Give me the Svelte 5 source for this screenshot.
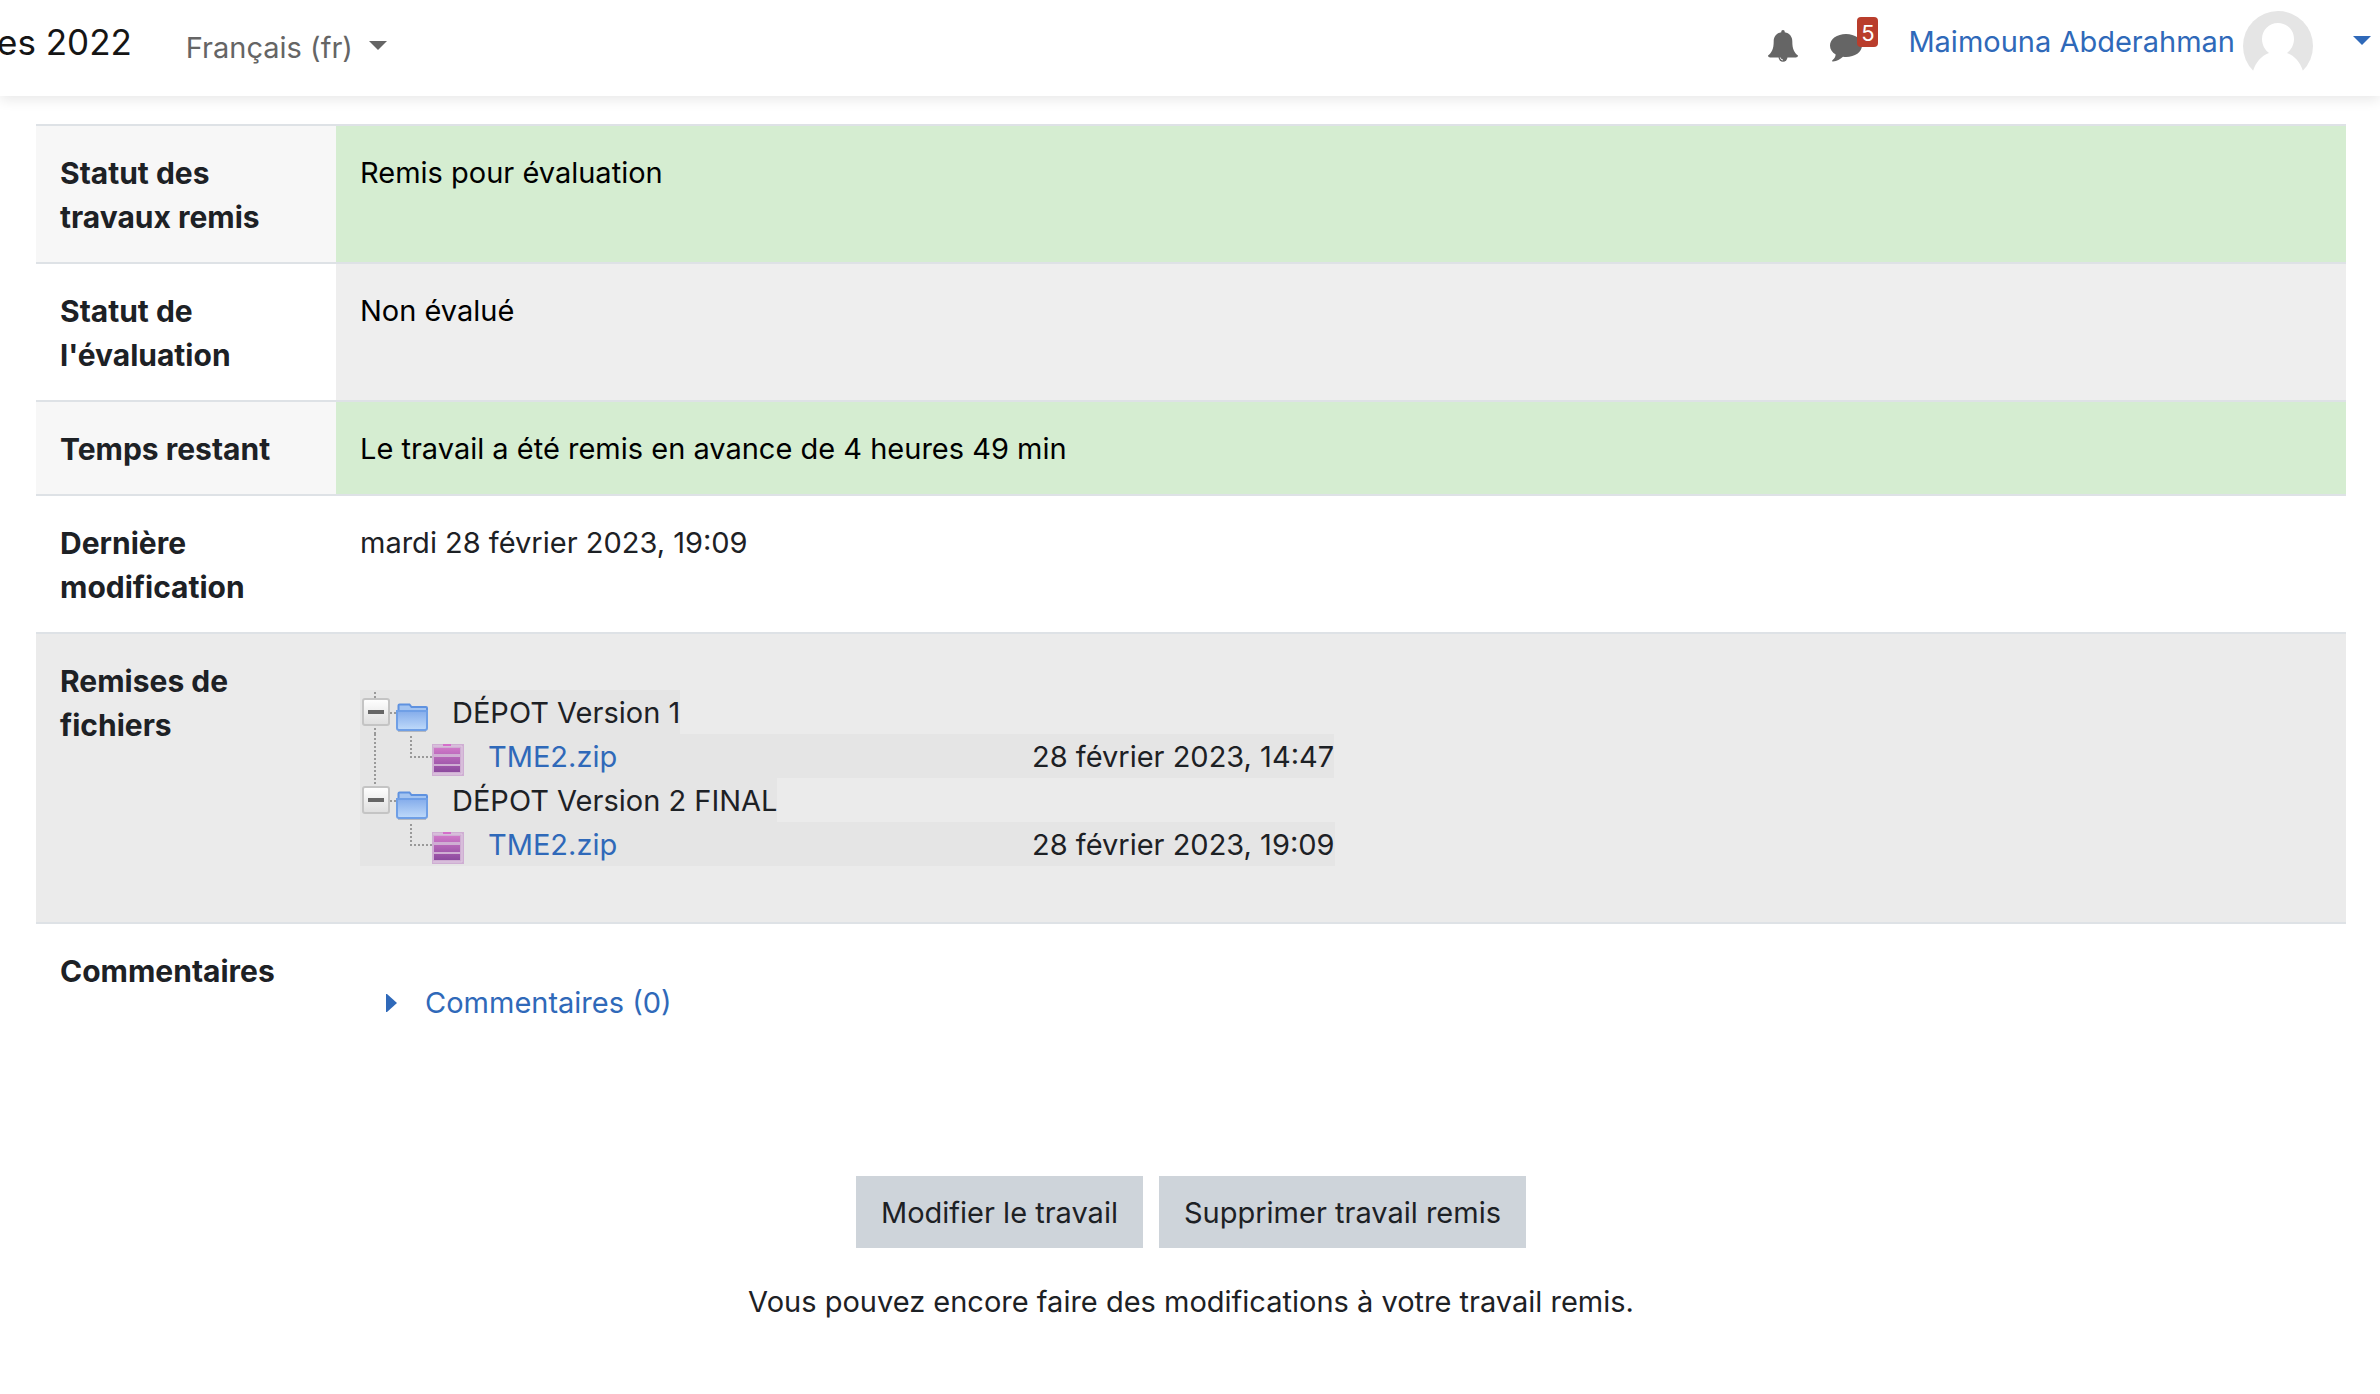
<script>
  const files = [
    { folder: 'DÉPOT Version 1', name: 'TME2.zip', date: '28 février 2023, 14:47' },
    { folder: 'DÉPOT Version 2 FINAL', name: 'TME2.zip', date: '28 février 2023, 19:09' }
  ];
</script>

<header>
  <span class="course">es 2022</span>
  <button class="lang">Français (fr)
    <svg width="18" height="9" viewBox="0 0 18 9"><path d="M0 0h18L9 9z" fill="currentColor" /></svg>
  </button>
  <div class="tools">
    <button class="icon" aria-label="Notifications">
      <svg width="30" height="32" viewBox="0 0 30 32">
        <path d="M15 0c1.200 0 1.800.8 1.700 2.200 4.800.8 7.600 4.500 7.600 9 0 8 2 11.300 5.700 14.300 0 1.200-1 2-2.200 2H2.200C1 27.500 0 26.700 0 25.500c3.700-3 5.700-6.300 5.700-14.300 0-4.500 2.800-8.200 7.600-9C13.200.8 13.800 0 15 0z" fill="#656565" />
        <path d="M10.500 27h9a4.500 4.800 0 0 1-9 0z" fill="#656565" />
        <path d="M12.300 27.500a2.700 2.700 0 0 0 2.700 2.500" fill="none" stroke="#fff" stroke-width=".9" />
      </svg>
    </button>
    <button class="icon chat" aria-label="Messages">
      <svg width="32" height="32" viewBox="0 -4 32 32">
        <path d="M16 0c9 0 16 5 16 11.500S25 23 16 23c-1 0-2 0-3-.2C10 25.500 7 27 3 27.500c-.9.100-1.200-.8-.6-1.300 2-1.700 3-3.200 3.300-5.700C2 18.400 0 15.200 0 11.500 0 5 7 0 16 0z" fill="#656565" />
      </svg>
      <span class="badge">5</span>
    </button>
    <a class="user" href="#user"><span>Maimouna Abderahman</span>
      <svg width="70" height="70" viewBox="0 0 70 70">
        <circle cx="35" cy="35" r="35" fill="#e5e5e5" />
        <path d="M35 12c9 0 16 7 16 16 0 6-3 11-7 14 8 3 13 9 16 18v10H10V60c3-9 8-15 16-18-4-3-7-8-7-14 0-9 7-16 16-16z" fill="#fff" />
        <path d="M0 60h70v10H0z" fill="#fff" />
      </svg>
    </a>
    <button class="caret" aria-label="Menu utilisateur">
      <svg width="18" height="9" viewBox="0 0 18 9"><path d="M0 0h18L9 9z" fill="currentColor" /></svg>
    </button>
  </div>
</header>

<main>
  <table>
    <tbody>
      <tr class="odd"><th scope="row">Statut des travaux remis</th><td class="ok">Remis pour évaluation</td></tr>
      <tr><th scope="row">Statut de l'évaluation</th><td class="neutral">Non évalué</td></tr>
      <tr class="odd"><th scope="row">Temps restant</th><td class="ok">Le travail a été remis en avance de 4 heures 49 min</td></tr>
      <tr><th scope="row">Dernière modification</th><td>mardi 28 février 2023, 19:09</td></tr>
      <tr class="active">
        <th scope="row">Remises de fichiers</th>
        <td>
          <div class="tree">
            {#each files as file, i}
              <div class="folder">
                <svg width="72" height="44" viewBox="0 0 72 44">
                  <defs>
                    <linearGradient id="blue{i}" x1="0" y1="0" x2="0" y2="1"><stop offset="0" stop-color="#84aceb" /><stop offset="1" stop-color="#bfdafa" /></linearGradient>
                    <linearGradient id="box{i}" x1="0" y1="0" x2="0" y2="1"><stop offset="0" stop-color="#fff" /><stop offset="1" stop-color="#dedede" /></linearGradient>
                  </defs>
                  <path d={i === 0 ? 'M15 2v6M15 38v6' : 'M15 0v8'} class="dots" />
                  <path d="M30 23h6" class="dots" />
                  <rect x="3" y="9" width="26" height="26" rx="2" fill="url(#box{i})" stroke="#c4c4c4" stroke-width="2" />
                  <path d="M8 22h16" stroke="#666" stroke-width="4" />
                  <path d="M38 41h28" stroke="#b4b8c0" stroke-width="2" />
                  <path d="M38.500 22v-6.500q0-1 1-1h10l2 2.500h14.500q1 0 1 1V22z" fill="#a3c4f1" stroke="#5f92e0" stroke-width="2" />
                  <path d="M37 21h30v17q0 2-2 2H39q-2 0-2-2z" fill="url(#blue{i})" stroke="#6f9fe6" stroke-width="2" />
                </svg>
                <span>{file.folder}</span>
              </div>
              <div class="file">
                <svg width="108" height="44" viewBox="0 0 108 44">
                  <defs><linearGradient id="violet{i}" x1="0" y1="0" x2="0" y2="1"><stop offset="0" stop-color="#cf78c8" /><stop offset="1" stop-color="#8c4a9e" /></linearGradient></defs>
                  {#if i === 0}<path d="M15 0v44" class="dots" />{/if}
                  <path d="M51 2v21h21" class="dots" />
                  <rect x="72" y="10" width="32" height="32" fill="#cfaed3" />
                  <path d="M74 14h26v6H74zM74 23h26v7H74zM74 32h26v6H74z" fill="url(#violet{i})" />
                  <path d="M73 12h29v28H73" fill="none" stroke="#e0cce2" stroke-width="1" />
                  <path d="M83 10h8v2h-8z" fill="#d56fcb" />
                </svg>
                <a href="#file">{file.name}</a>
                <time>{file.date}</time>
              </div>
            {/each}
          </div>
        </td>
      </tr>
      <tr>
        <th scope="row">Commentaires</th>
        <td>
          <a class="comments" href="#comments">
            <svg width="11" height="18" viewBox="0 0 11 18"><path d="M0 0h1l10 9-10 9H0z" fill="currentColor" /></svg>
            Commentaires (0)
          </a>
        </td>
      </tr>
    </tbody>
  </table>
  <div class="actions">
    <button>Modifier le travail</button>
    <button>Supprimer travail remis</button>
  </div>
  <p>Vous pouvez encore faire des modifications à votre travail remis.</p>
</main>

<style>
  :global(body) {
    background: #fff;
    color: #1d2125;
    font: 29px/44px Inter, "Liberation Sans", sans-serif;
  }
  button { font: inherit; color: inherit; border: 0; background: none; padding: 0; }
  a { color: #2f69b9; text-decoration: none; }
  svg { display: block; flex: none; }
  header {
    display: flex;
    height: 96px;
    overflow-x: clip;
    box-shadow: 0 4px 12px rgba(0, 0, 0, .09);
  }
  .course { margin-left: -3px; font-size: 35px; line-height: 84px; color: #151515; }
  .lang { display: flex; align-items: center; gap: 16px; margin-left: 54px; color: #656565; }
  .lang svg { margin-bottom: 6px; }
  .tools { display: flex; align-items: center; margin-left: auto; padding: 0 9px 4px 0; }
  .icon { margin-right: 32px; }
  .chat { position: relative; margin-right: 46px; }
  .badge {
    position: absolute;
    top: -13px;
    right: -16px;
    width: 21px;
    height: 30px;
    border-radius: 4px;
    background: #b93d2c;
    color: #fff;
    font-size: 22px;
    line-height: 32px;
  }
  .user { display: flex; align-items: center; gap: 8px; }
  .user span { padding-bottom: 8px; }
  .caret { margin: 0 0 12px 40px; color: #2f69b9; }
  main { padding: 28px 34px 56px 36px; }
  table { width: 100%; border-collapse: separate; border-spacing: 0; table-layout: fixed; }
  th, td { padding: 25px 24px 23px; border-top: 2px solid #dee2e6; text-align: left; vertical-align: top; }
  th { width: 252px; font-size: 30px; }
  .odd { background: #f7f7f7; }
  .ok { background: #d5edd1; color: #000; }
  .neutral { background: #eee; color: #000; }
  .active { background: #ebebeb; }
  .tree { margin: 31px 0 33px; line-height: 46px; }
  .folder, .file { display: flex; width: fit-content; height: 44px; background: #e5e5e5; }
  .folder span { margin-left: 20px; }
  .file a { margin-left: 20px; width: 544px; }
  .dots { fill: none; stroke: #999; stroke-width: 2; stroke-dasharray: 2 2; }
  .comments { display: flex; align-items: center; gap: 28px; margin: 32px 0 32px 26px; }
  .actions { display: flex; justify-content: center; gap: 16px; margin-top: 96px; }
  .actions button { padding: 15px 25px 13px; background: #ced4da; }
  p { margin: 32px 0 0; text-align: center; }
</style>
